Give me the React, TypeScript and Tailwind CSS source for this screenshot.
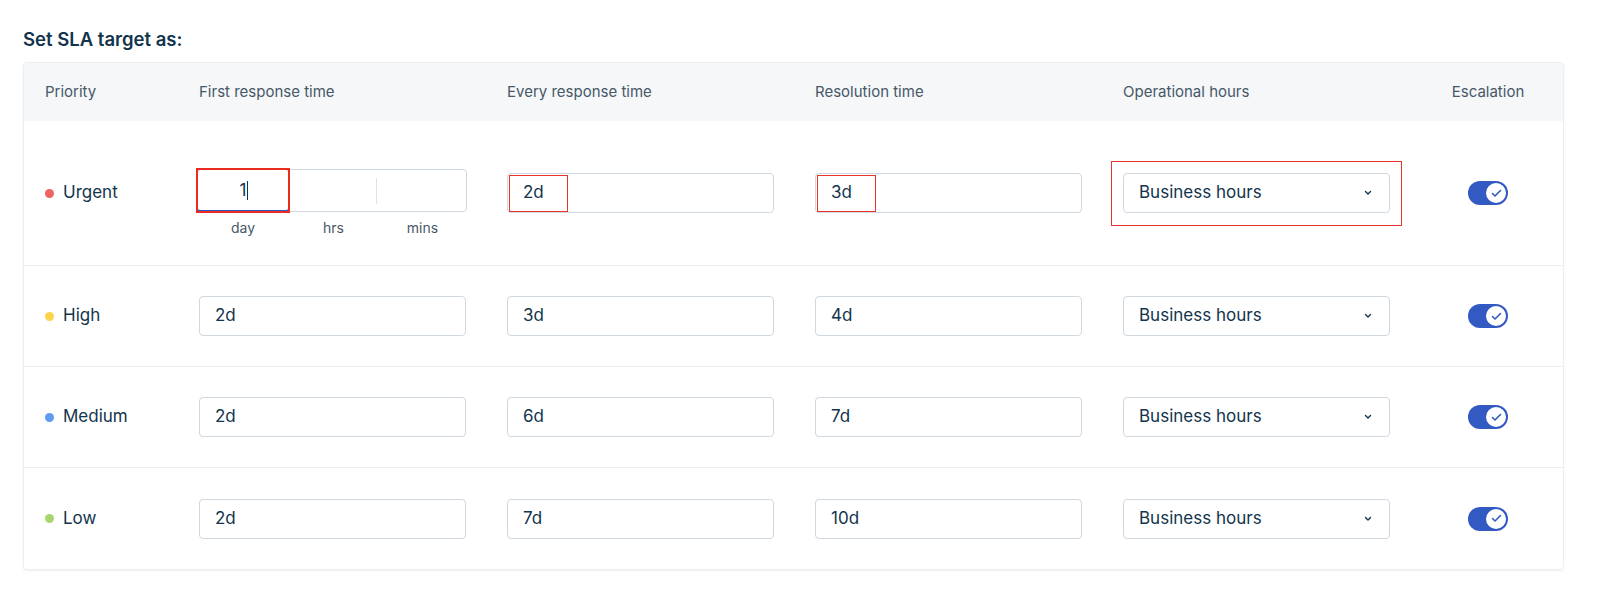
import React from 'react';

const rows = [
  { name: 'Urgent', dot: 'bg-[#ee6363]', first: '1', every: '2d', res: '3d' },
  { name: 'High', dot: 'bg-[#fcd34d]', first: '2d', every: '3d', res: '4d' },
  { name: 'Medium', dot: 'bg-[#5f9bf1]', first: '2d', every: '6d', res: '7d' },
  { name: 'Low', dot: 'bg-[#a7d570]', first: '2d', every: '7d', res: '10d' },
];

const grid = 'grid grid-cols-[154px_308px_308px_308px_290px_1fr] pl-[21px]';

function TextBox({ value, marked }: { value: string; marked?: boolean }) {
  return (
    <div className="relative w-[267px] h-10 rounded-[4px] border border-[#cfd7df] bg-white flex items-center px-[15px] text-[17px] text-[#12344d]">
      {value}
      {marked && <span className="absolute left-[1px] top-[1px] w-[59px] h-[37px] border-[1.5px] border-[#e8352a]" />}
    </div>
  );
}

function Select({ marked }: { marked?: boolean }) {
  return (
    <div className="relative w-[267px] h-10 rounded-[4px] border border-[#cfd7df] bg-white flex items-center justify-between pl-[15px] pr-4 text-[17px] text-[#12344d]">
      <span>Business hours</span>
      <svg width="10" height="6" viewBox="0 0 10 6" fill="none" stroke="#12344d" strokeWidth="1.4" strokeLinecap="round" strokeLinejoin="round">
        <path d="M2.5 1.5 5 4l2.5-2.5" />
      </svg>
      {marked && <span className="absolute -left-[13px] -top-[13px] -right-[13px] -bottom-[14px] border-[1.5px] border-[#e8352a]" />}
    </div>
  );
}

function Toggle() {
  return (
    <div className="w-10 h-6 rounded-full bg-[#3359c2] flex items-center justify-end pr-[2px]">
      <div className="w-5 h-5 rounded-full bg-white flex items-center justify-center">
        <svg width="11" height="9" viewBox="0 0 11 9" fill="none" stroke="#3359c2" strokeWidth="1.6" strokeLinecap="round" strokeLinejoin="round">
          <path d="M1.5 4.5 4 7l5.5-5.5" />
        </svg>
      </div>
    </div>
  );
}

function DurationBox() {
  return (
    <div className="w-[270px]">
      <div className="flex h-[43px] rounded-[4px] border border-[#cfd7df] bg-white">
        <div className="relative w-[92px] -m-px">
          <div className="absolute inset-0 rounded-[4px] border-[1.5px] border-[#c8d0dc] border-b-[2.5px] border-b-[#2a5cc7]" />
          <div className="absolute -inset-[1px] border-2 border-[#ea2b20]" />
          <div className="relative h-full flex items-center justify-center text-[17px] text-[#12344d] pl-[2px]">
            1<span className="w-px h-[19px] bg-[#12344d] ml-[1px]" />
          </div>
        </div>
        <div className="w-[89px] flex items-center justify-end">
          <span className="w-px h-[26px] bg-[#dfe3e8]" />
        </div>
        <div className="flex-1" />
      </div>
      <div className="flex text-[14px] text-[#475867] mt-[5px]">
        <span className="w-[92px] text-center">day</span>
        <span className="w-[89px] text-center">hrs</span>
        <span className="flex-1 text-center">mins</span>
      </div>
    </div>
  );
}

export default function App() {
  return (
    <div className="w-[1600px] h-[616px] bg-white font-['Inter',sans-serif] pl-[23px] pt-[27px]">
      <h2 className="text-[18.5px] font-semibold text-[#12344d] leading-6">Set SLA target as:</h2>
      <div className="mt-[11px] w-[1541px] rounded-[4px] border border-[#ebeff3] shadow-[0_1px_2px_rgba(18,52,77,0.08)] overflow-hidden">
        <div className={`${grid} h-[58px] items-center bg-[#f5f7f9] text-[15px] text-[#475867]`}>
          <span>Priority</span>
          <span>First response time</span>
          <span>Every response time</span>
          <span>Resolution time</span>
          <span>Operational hours</span>
          <span className="text-center">Escalation</span>
        </div>
        {rows.map((r, i) => (
          <div
            key={r.name}
            className={`${grid} items-center bg-white ${i === 0 ? 'h-[145px]' : 'h-[101px]'} ${i < rows.length - 1 ? 'border-b border-[#ebeff3]' : ''}`}
          >
            <div className="flex items-center gap-[9px] text-[17px] text-[#12344d]">
              <span className={`w-[9px] h-[9px] rounded-full ${r.dot}`} />
              {r.name}
            </div>
            {i === 0 ? (
              <div className="self-start pt-[48px] -ml-[2px]">
                <DurationBox />
              </div>
            ) : (
              <TextBox value={r.first} />
            )}
            <TextBox value={r.every} marked={i === 0} />
            <TextBox value={r.res} marked={i === 0} />
            <Select marked={i === 0} />
            <div className="flex justify-center">
              <Toggle />
            </div>
          </div>
        ))}
      </div>
    </div>
  );
}
